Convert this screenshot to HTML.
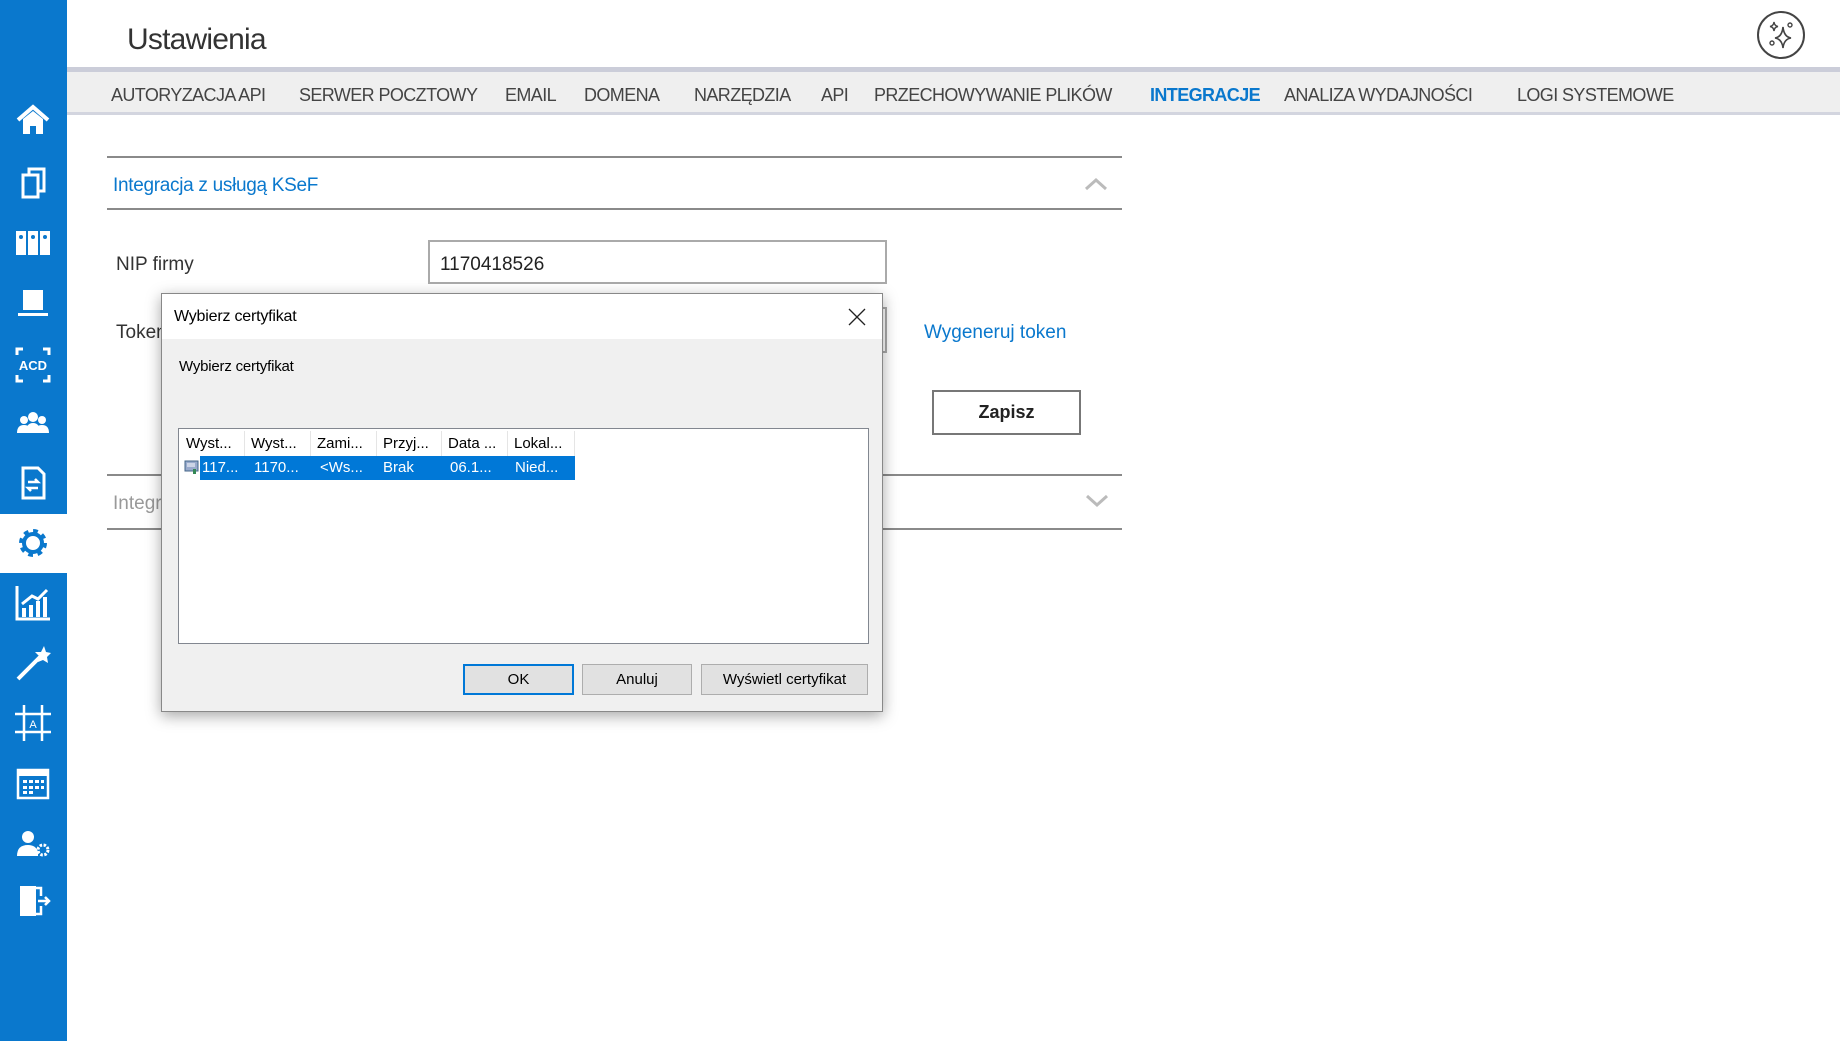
<!DOCTYPE html>
<html><head><meta charset="utf-8"><style>
*{margin:0;padding:0;box-sizing:border-box}
body{width:1840px;height:1043px;position:relative;overflow:hidden;background:#fff;font-family:"Liberation Sans",sans-serif;color:#333}
.a{position:absolute;white-space:nowrap}
#side{position:absolute;left:0;top:0;width:67px;height:1041px;background:#0a78cd}
.ic{position:absolute;left:14px;width:38px;height:38px}
.nav{position:absolute;top:85px;font-size:18px;color:#444;letter-spacing:-0.6px}
.dl{font-size:15px;color:#000;letter-spacing:-0.2px}
.btn{position:absolute;height:31px;background:#e1e1e1;border:1px solid #adadad;font-size:15px;color:#000;text-align:center;line-height:29px}
.col{position:absolute;top:137px;height:25px;border-right:1px solid #e5e5e5;font-size:15px;color:#000;padding-left:6px;line-height:25px}
.cel{position:absolute;top:161px;font-size:15px;color:#fff;line-height:25px}
</style></head><body>
<div id="side">
<svg class="ic" style="top:101px" viewBox="0 0 38 38"><path d="M4 19L19 6L34 19" fill="none" stroke="#fff" stroke-width="4"/><path d="M9 18V33H16V25H22V33H29V18L19 10Z" fill="#fff"/></svg>
<svg class="ic" style="top:163px" viewBox="0 0 38 38"><path d="M9 12H24V34H9Z M15 12V6H30V28H24" fill="none" stroke="#fff" stroke-width="3"/></svg>
<svg class="ic" style="top:223px" viewBox="0 0 38 38"><rect x="2" y="8" width="10" height="24" fill="#fff"/><rect x="14" y="8" width="10" height="24" fill="#fff"/><rect x="26" y="8" width="10" height="24" fill="#fff"/><circle cx="7" cy="14" r="2" fill="#0a78cd"/><circle cx="19" cy="14" r="2" fill="#0a78cd"/><circle cx="31" cy="14" r="2" fill="#0a78cd"/></svg>
<svg class="ic" style="top:284px" viewBox="0 0 38 38"><rect x="9" y="6" width="20" height="20" fill="#fff"/><path d="M4 29H34V32H4Z" fill="#fff"/></svg>
<svg class="ic" style="top:346px" viewBox="0 0 38 38"><path d="M3 9V3H9M29 3H35V9M3 29V35H9M29 35H35V29" fill="none" stroke="#fff" stroke-width="3"/><text x="19" y="24" font-size="13" font-weight="bold" fill="#fff" text-anchor="middle" font-family="Liberation Sans">ACD</text></svg>
<svg class="ic" style="top:405px" viewBox="0 0 38 38"><circle cx="10" cy="15" r="4" fill="#fff"/><circle cx="19" cy="12" r="5" fill="#fff"/><circle cx="28" cy="15" r="4" fill="#fff"/><path d="M3 28Q3 20 10 20Q17 20 17 28ZM12 28Q12 18 19 18Q26 18 26 28ZM21 28Q21 20 28 20Q35 20 35 28Z" fill="#fff"/></svg>
<svg class="ic" style="top:464px" viewBox="0 0 38 38"><path d="M9 4H24L30 10V34H9Z" fill="none" stroke="#fff" stroke-width="3"/><path d="M14 18H24L21 15M24 24H14L17 27" fill="none" stroke="#fff" stroke-width="2.5"/></svg>
<div style="position:absolute;left:0;top:514px;width:68px;height:59px;background:#fff"></div>
<svg class="ic" style="top:524px" viewBox="0 0 38 38"><circle cx="19" cy="19" r="11" fill="none" stroke="#0a78cd" stroke-width="6" stroke-dasharray="4.3 4.3"/><circle cx="19" cy="19" r="9" fill="none" stroke="#0a78cd" stroke-width="4"/></svg>
<svg class="ic" style="top:584px" viewBox="0 0 38 38"><path d="M3 2V35H36" fill="none" stroke="#fff" stroke-width="3"/><path d="M8 33V24H12V33M15 33V21H19V33M22 33V17H26V33M29 33V13H33V33" fill="#fff"/><path d="M8 20L18 12L24 15L33 6" fill="none" stroke="#fff" stroke-width="3"/></svg>
<svg class="ic" style="top:644px" viewBox="0 0 38 38"><path d="M4 35L26 13" stroke="#fff" stroke-width="4"/><path d="M30 2L32 8L37 9L33 13L34 19L29 16L24 18L25 12L21 8L27 8Z" fill="#fff"/></svg>
<svg class="ic" style="top:704px" viewBox="0 0 38 38"><path d="M1 10H37M1 28H37M10 1V37M28 1V37" stroke="#fff" stroke-width="2.5"/><text x="19" y="24" font-size="11" fill="#fff" text-anchor="middle" font-family="Liberation Sans">A</text></svg>
<svg class="ic" style="top:765px" viewBox="0 0 38 38"><rect x="4" y="5" width="30" height="28" fill="none" stroke="#fff" stroke-width="2.5"/><rect x="4" y="5" width="30" height="6" fill="#fff"/><g fill="#fff"><rect x="9" y="15" width="4" height="3"/><rect x="15" y="15" width="4" height="3"/><rect x="21" y="15" width="4" height="3"/><rect x="27" y="15" width="3" height="3"/><rect x="9" y="21" width="4" height="3"/><rect x="15" y="21" width="4" height="3"/><rect x="21" y="21" width="4" height="3"/><rect x="27" y="21" width="3" height="3"/><rect x="9" y="26" width="4" height="3"/><rect x="15" y="26" width="4" height="3"/></g></svg>
<svg class="ic" style="top:824px" viewBox="0 0 38 38"><circle cx="14" cy="13" r="6" fill="#fff"/><path d="M3 32Q3 21 14 21Q22 21 24 28V32Z" fill="#fff"/><circle cx="29" cy="26" r="5" fill="none" stroke="#fff" stroke-width="3" stroke-dasharray="2.5 1.5"/></svg>
<svg class="ic" style="top:882px" viewBox="0 0 38 38"><path d="M6 4H22V34H6Z" fill="#fff"/><path d="M22 6H27V14M27 24V32H22M24 19H35M31 15L35 19L31 23" fill="none" stroke="#fff" stroke-width="2.5"/></svg>
</div>

<div class="a" style="left:127px;top:23px;font-size:30px;color:#333;letter-spacing:-0.8px">Ustawienia</div>
<svg class="a" style="left:1756px;top:10px" width="50" height="50" viewBox="0 0 50 50"><circle cx="25" cy="25" r="23" fill="none" stroke="#444" stroke-width="2"/><path d="M27 17Q28 27 35 28Q28 29 27 38Q26 29 19 28Q26 27 27 17Z" fill="none" stroke="#444" stroke-width="1.6"/><path d="M18 12Q18.5 16 22 16.5Q18.5 17 18 21Q17.5 17 14 16.5Q17.5 16 18 12Z" fill="none" stroke="#444" stroke-width="1.4"/><circle cx="34" cy="15" r="2" fill="none" stroke="#444" stroke-width="1.4"/><circle cx="16" cy="33" r="2" fill="none" stroke="#444" stroke-width="1.4"/></svg>

<div style="position:absolute;left:67px;top:67px;width:1773px;height:5px;background:#cbcdd9"></div>
<div style="position:absolute;left:67px;top:72px;width:1773px;height:43px;background:#efefef;border-bottom:3px solid #d3d5df"></div>
<div class="nav" style="left:111px">AUTORYZACJA API</div>
<div class="nav" style="left:299px">SERWER POCZTOWY</div>
<div class="nav" style="left:505px">EMAIL</div>
<div class="nav" style="left:584px">DOMENA</div>
<div class="nav" style="left:694px">NARZĘDZIA</div>
<div class="nav" style="left:821px">API</div>
<div class="nav" style="left:874px">PRZECHOWYWANIE PLIKÓW</div>
<div class="nav" style="left:1150px;color:#0a78cd;font-weight:bold">INTEGRACJE</div>
<div class="nav" style="left:1284px">ANALIZA WYDAJNOŚCI</div>
<div class="nav" style="left:1517px">LOGI SYSTEMOWE</div>

<div style="position:absolute;left:107px;top:156px;width:1015px;height:2px;background:#8a8a8a"></div>
<div class="a" style="left:113px;top:175px;font-size:19px;color:#0a78cd;letter-spacing:-0.3px">Integracja z usługą KSeF</div>
<svg class="a" style="left:1084px;top:177px" width="24" height="14"><path d="M2 12L12 3L22 12" fill="none" stroke="#bbb" stroke-width="3"/></svg>
<div style="position:absolute;left:107px;top:208px;width:1015px;height:2px;background:#8a8a8a"></div>

<div class="a" style="left:116px;top:254px;font-size:19px;color:#333">NIP firmy</div>
<div style="position:absolute;left:428px;top:240px;width:459px;height:44px;border:2px solid #aaa"></div>
<div class="a" style="left:440px;top:254px;font-size:19px;color:#222">1170418526</div>
<div class="a" style="left:116px;top:322px;font-size:19px;color:#333">Token</div>
<div style="position:absolute;left:428px;top:307px;width:459px;height:46px;border:2px solid #aaa"></div>
<div class="a" style="left:924px;top:322px;font-size:19px;color:#0a78cd">Wygeneruj token</div>
<div style="position:absolute;left:932px;top:390px;width:149px;height:45px;border:2px solid #777;background:#fff;text-align:center;line-height:41px;font-size:18px;font-weight:bold;color:#222">Zapisz</div>
<div style="position:absolute;left:107px;top:474px;width:1015px;height:2px;background:#8a8a8a"></div>
<div class="a" style="left:113px;top:493px;font-size:19px;color:#999">Integracja</div>
<svg class="a" style="left:1085px;top:494px" width="24" height="14"><path d="M2 2L12 11L22 2" fill="none" stroke="#bbb" stroke-width="3"/></svg>
<div style="position:absolute;left:107px;top:528px;width:1015px;height:2px;background:#8a8a8a"></div>

<div style="position:absolute;left:161px;top:293px;width:722px;height:419px;background:#f0f0f0;border:1px solid #888;box-shadow:0 4px 14px rgba(0,0,0,.35)">
 <div style="position:absolute;left:0;top:0;width:720px;height:45px;background:#fff"></div>
 <div class="a dl" style="left:12px;top:14px;font-size:16px">Wybierz certyfikat</div>
 <svg class="a" style="left:686px;top:14px" width="18" height="18"><path d="M1 1L17 17M17 1L1 17" stroke="#222" stroke-width="1.3"/></svg>
 <div class="a dl" style="left:17px;top:64px">Wybierz certyfikat</div>
 <div style="position:absolute;left:16px;top:134px;width:691px;height:216px;background:#fff;border:1px solid #828790"></div>
 <div class="col" style="left:18px;width:65px">Wyst...</div>
 <div class="col" style="left:83px;width:66px">Wyst...</div>
 <div class="col" style="left:149px;width:66px">Zami...</div>
 <div class="col" style="left:215px;width:65px">Przyj...</div>
 <div class="col" style="left:280px;width:66px">Data ...</div>
 <div class="col" style="left:346px;width:67px">Lokal...</div>
 <div style="position:absolute;left:38px;top:162px;width:375px;height:24px;background:#0078d7"></div>
 <svg class="a" style="left:22px;top:165px" width="16" height="16"><rect x="1" y="2" width="13" height="10" fill="#9ac" stroke="#468"/><path d="M3 5H11M3 7H11" stroke="#fff"/><rect x="9" y="10" width="3" height="5" fill="#385"/></svg>
 <div class="cel" style="left:40px">117...</div>
 <div class="cel" style="left:92px">1170...</div>
 <div class="cel" style="left:158px">&lt;Ws...</div>
 <div class="cel" style="left:221px">Brak</div>
 <div class="cel" style="left:288px">06.1...</div>
 <div class="cel" style="left:353px">Nied...</div>
 <div class="btn" style="left:301px;top:370px;width:111px;border:2px solid #0078d7;line-height:27px">OK</div>
 <div class="btn" style="left:420px;top:370px;width:110px">Anuluj</div>
 <div class="btn" style="left:539px;top:370px;width:167px">Wyświetl certyfikat</div>
</div>
</body></html>
